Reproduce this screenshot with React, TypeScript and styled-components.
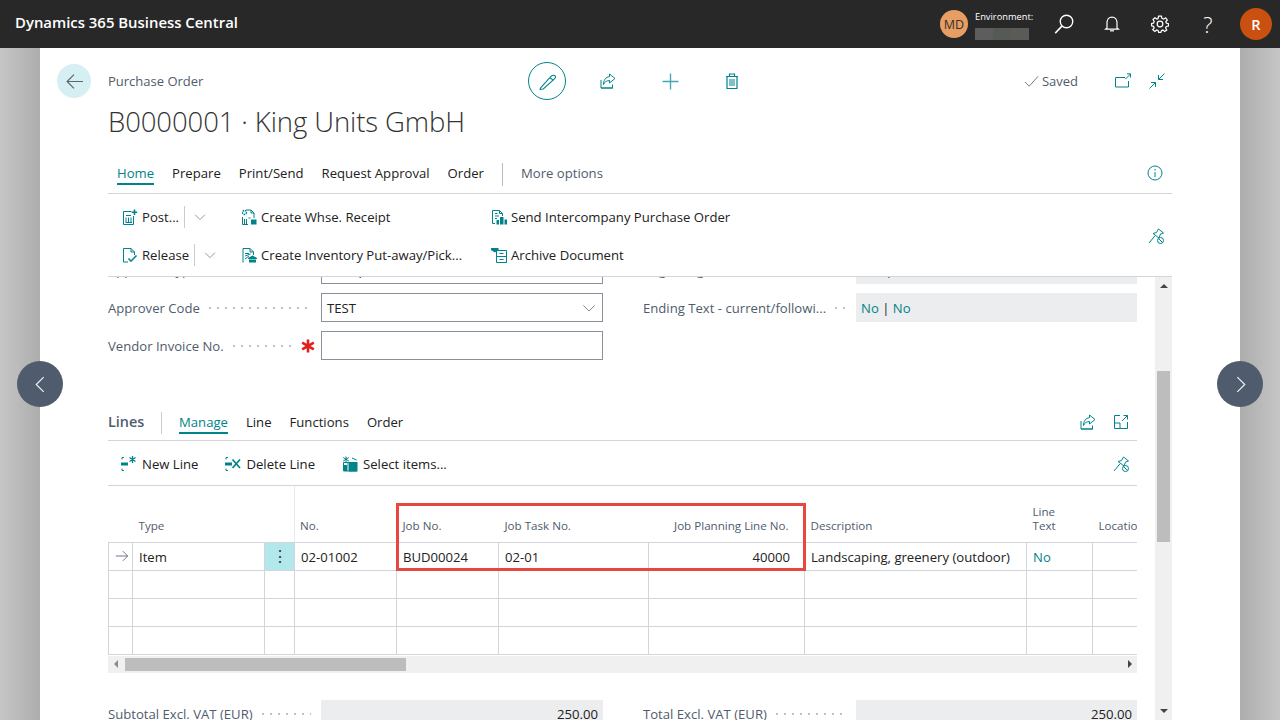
import styled, { createGlobalStyle } from 'styled-components';

const teal = '#00838a';
const label = '#505c6d';
const ink = '#212121';
const rule = '#d3d5da';
const uiFont = '"Open Sans", "Liberation Sans", sans-serif';

const Global = createGlobalStyle`
  html, body { margin: 0; padding: 0; background: #fff; }
  body { font-family: ${uiFont}; font-size: 13.13px; color: ${ink}; }
  * { box-sizing: border-box; }
`;

/* ---- icons ---- */

const Svg = styled.svg<{ $c?: string }>`
  display: block;
  flex: none;
  fill: none;
  stroke: ${(p) => p.$c ?? teal};
  stroke-width: 1;
`;

function Icon({ size = 16, c, children }: { size?: number; c?: string; children: React.ReactNode }) {
  return (
    <Svg $c={c} width={size} height={size} viewBox="0 0 16 16">
      {children}
    </Svg>
  );
}

const Solid = ({ d }: { d: string }) => <path d={d} fill={teal} stroke="none" />;

const PostIcon = () => (
  <Icon>
    <path d="M9.5 2.5H1.5V15.5H11.5V7" />
    <path d="M4 6.5H9M4 8.5V13M6.5 8.5V13M9 8.5V13M3.5 13.5H10" />
    <path d="M12.5 0.5V6M9.8 3.2H15.2" strokeWidth="1.6" />
  </Icon>
);
const ReleaseIcon = () => (
  <Icon>
    <path d="M1.5 1.5H9L12.5 5V8M9 1.5V5H12.5M1.5 1.5V15H6" />
    <path d="M6.5 11.5L9 14.2L14.5 8.5" strokeWidth="1.6" />
  </Icon>
);
const ReceiptIcon = () => (
  <Icon>
    <path d="M5 1H10L13 4V9M10 1V4H13M1.5 8V15.5H7" />
    <circle cx="3.5" cy="3.5" r="2" strokeDasharray="1.5 .7" strokeWidth="1.4" />
    <path d="M3.5 10V15M5.5 10V15M7.5 9H9.5" />
    <Solid d="M10 10.5H15.5V15.5H10Z" />
  </Icon>
);
const PickIcon = () => (
  <Icon>
    <path d="M2 15.5V1.5H9L12.5 5V8M9 1.5V5H12.5" />
    <path d="M4 6.5H8M4 9L9.5 7M4 12L8 9" />
    <Solid d="M7 11L11.5 8.5L16 11V12H7ZM8 12.5H15V15.5H8Z" />
  </Icon>
);
const IntercompanyIcon = () => (
  <Icon>
    <path d="M1.5 14.5V1.5H8.5L11.5 4.5V7M8.5 1.5V4.5H11.5M1.5 14.5H4" />
    <path d="M4 4.5H6.5M4 7H8M4 9.5H6" />
    <Solid d="M5.5 11H8V15.5H5.5ZM9 8H12.5V15.5H9ZM13.5 10.5H16V15.5H13.5Z" />
  </Icon>
);
const ArchiveIcon = () => (
  <Icon>
    <path d="M5.5 3.5H15.5V15.5H5.5ZM5.5 9.5H15.5M8.5 6.5H12.5M8.5 12.5H12.5" />
    <Solid d="M0 1H7.5V3L3.8 5.5L0 3Z" />
  </Icon>
);
const NewLineIcon = () => (
  <Icon>
    <path d="M1 3.5V1.5H3M1 12.5V14.5H3" />
    <Solid d="M0 6.5H7V9.5H0Z" />
    <path d="M11.5 0V7M8.5 1.5L14.5 5.5M8.5 5.5L14.5 1.5" strokeWidth="1.3" />
  </Icon>
);
const DeleteLineIcon = () => (
  <Icon>
    <path d="M1 3.5V1.5H3M1 12.5V14.5H3" />
    <Solid d="M0 6.5H7V9.5H0Z" />
    <path d="M7.5 3.5L15 12M15 3.5L7.5 12" strokeWidth="1.7" />
  </Icon>
);
const SelectItemsIcon = () => (
  <Icon>
    <path d="M1.5 6.5H14.5V15H1.5ZM6 6.5V15" />
    <Solid d="M7 6H15.5V15.5H7ZM1.5 9H5V15H1.5Z" />
    <path d="M4 0.5V6M1.2 1.5L6.8 5M1.2 5L6.8 1.5" />
    <path d="M10 2L14.5 4" />
  </Icon>
);
const ChevronDown = ({ c = '#6d7682', size = 14 }: { c?: string; size?: number }) => (
  <Icon c={c} size={size}>
    <path d="M1.5 5L8 11.5L14.5 5" />
  </Icon>
);
const PinOff = () => (
  <Icon size={16}>
    <path d="M10.5 1L15.5 5L12.5 6L11 10L5 5.5L8.5 4.5ZM6.8 8L1 15" />
    <circle cx="12.5" cy="12.5" r="3" />
    <path d="M10.5 10.5L14.5 14.5" />
  </Icon>
);
const ShareIcon = () => (
  <Icon size={16}>
    <path d="M1 7V15H12.5V11.5M1 15H13" />
    <path d="M9.5 1L15 5.5L9.5 10V7.5C6.5 7.5 4.5 9 3.5 11.5C3.5 7.5 5.5 4 9.5 3.7Z" />
  </Icon>
);
const EditIcon = () => (
  <Icon size={17}>
    <path d="M1.5 14.5L11.5 3.5C12.5 2.5 14.5 2.5 15.5 3.5C16 4.5 15.5 5 14.5 6L4 15.5L1 16Z" transform="translate(0 -0.5)" />
    <path d="M10.5 4.5L13.5 7" />
  </Icon>
);
const PlusIcon = () => (
  <Icon size={17} c="#4aa6ab">
    <path d="M8 0.5V15.5M0.5 8H15.5" strokeWidth="1.3" />
  </Icon>
);
const TrashIcon = () => (
  <Icon size={16}>
    <path d="M3 3.5V15.5H13V3.5M2 3.5H14M5.5 3.5V1H10.5V3.5" strokeWidth="1.2" />
    <path d="M6 6V13M8 6V13M10 6V13" />
  </Icon>
);
const PopOutIcon = () => (
  <Icon size={16}>
    <path d="M10 4.5H0.5V14H13.5V8" />
    <path d="M10.5 6L15.5 1M12 0.8H15.5V4.5" />
  </Icon>
);
const CollapseIcon = () => (
  <Icon size={16}>
    <path d="M15.5 0.5L9.5 6.5M9.5 2V6.5H14" />
    <path d="M0.5 15.5L6.5 9.5M2 9.5H6.5V14" />
  </Icon>
);
const ExpandLinesIcon = () => (
  <Icon>
    <path d="M7 1.5H1.5V14.5H14.5V8M1.5 9H7V14.5M9 7L14.5 1.5M10.5 1.5H14.5V5.5" />
  </Icon>
);
const InfoIcon = () => (
  <Icon>
    <circle cx="8" cy="8" r="7" />
    <path d="M8 7V12M8 4V5.5" />
  </Icon>
);
const SearchIcon = () => (
  <Icon size={20} c="#fff">
    <circle cx="10" cy="6" r="5" strokeWidth="1.1" />
    <path d="M6.5 9.5L1 15.3" strokeWidth="1.2" />
  </Icon>
);
const BellIcon = () => (
  <Icon size={16} c="#fff">
    <path d="M3 12V6.5C3 3.5 5 1.2 8 1.2S13 3.5 13 6.5V12L14.5 13.2H1.5Z" strokeWidth="1.2" />
    <path d="M6 14.8H10" strokeWidth="1.2" />
  </Icon>
);
const GearIcon = () => (
  <Icon size={18} c="#fff">
    <circle cx="8" cy="8" r="2.5" strokeWidth="1.1" />
    <path
      d="M6.7 1H9.3L9.7 3L11.3 3.7L13 2.5L14.5 4.4L13.2 6L13.6 7.2L15.5 7.8V9.8L13.6 10.2L13 11.5L14 13.3L12.2 14.7L10.6 13.4L9.3 13.9L8.8 15.5H6.8L6.3 13.8L5 13.3L3.4 14.6L1.6 13L2.8 11.4L2.2 10.1L0.5 9.6V7.6L2.3 7.1L2.8 5.8L1.8 4L3.5 2.5L5.2 3.6L6.3 3.1Z"
      strokeWidth="1.1"
    />
  </Icon>
);
const CheckIcon = () => (
  <Icon size={15} c="#6a7480">
    <path d="M1 8.5L5.5 13L15 2.5" />
  </Icon>
);
const ArrowLeft = () => (
  <Icon size={17} c="#5b6672">
    <path d="M16 8H1M7.5 1.5L1 8L7.5 14.5" strokeWidth="1.1" />
  </Icon>
);
const ArrowRight = () => (
  <Icon size={14} c="#5b6672">
    <path d="M1 8H14.5M9 2.5L14.5 8L9 13.5" />
  </Icon>
);
const NavChevron = ({ dir }: { dir: 'left' | 'right' }) => (
  <Icon size={17} c="#f2f3f5">
    <path d={dir === 'left' ? 'M11 1L4 8L11 15' : 'M5 1L12 8L5 15'} strokeWidth="1.1" />
  </Icon>
);

/* ---- data ---- */

const barRows = [
  { Ico: PostIcon, text: 'Post...', split: true },
  { Ico: ReceiptIcon, text: 'Create Whse. Receipt' },
  { Ico: IntercompanyIcon, text: 'Send Intercompany Purchase Order' },
  { Ico: ReleaseIcon, text: 'Release', split: true },
  { Ico: PickIcon, text: 'Create Inventory Put-away/Pick...' },
  { Ico: ArchiveIcon, text: 'Archive Document' },
];

const lineActions = [
  { Ico: NewLineIcon, text: 'New Line' },
  { Ico: DeleteLineIcon, text: 'Delete Line' },
  { Ico: SelectItemsIcon, text: 'Select items...' },
];

const columns = [24, 132, 30, 102, 102, 150, 156, 222, 66, 100];

export default function App() {
  return (
    <Page>
      <Global />
      <TopBar>
        <Brand>Dynamics 365 Business Central</Brand>
        <TopRight>
          <Initials>MD</Initials>
          <Env>
            <EnvLabel>Environment:</EnvLabel>
            <EnvMask />
          </Env>
          <TopIcon><SearchIcon /></TopIcon>
          <TopIcon><BellIcon /></TopIcon>
          <TopIcon><GearIcon /></TopIcon>
          <TopIcon><Question>?</Question></TopIcon>
          <UserBadge>R</UserBadge>
        </TopRight>
      </TopBar>

      <Stage>
        <Side $flip={false} />
        <Sheet>
          <HeaderRow>
            <BackButton><ArrowLeft /></BackButton>
            <Crumb>Purchase Order</Crumb>
            <EditButton><EditIcon /></EditButton>
            <HeaderIcons>
              <IconSlot><ShareIcon /></IconSlot>
              <IconSlot><PlusIcon /></IconSlot>
              <IconSlot><TrashIcon /></IconSlot>
            </HeaderIcons>
            <Saved><CheckIcon />Saved</Saved>
            <WindowIcons>
              <IconSlot><PopOutIcon /></IconSlot>
              <IconSlot><CollapseIcon /></IconSlot>
            </WindowIcons>
          </HeaderRow>
          <Title>B0000001 · King Units GmbH</Title>

          <Tabs>
            <Tab $active>Home</Tab>
            <Tab>Prepare</Tab>
            <Tab>Print/Send</Tab>
            <Tab>Request Approval</Tab>
            <Tab>Order</Tab>
            <TabDivider />
            <Tab $muted>More options</Tab>
            <TabEnd><InfoIcon /></TabEnd>
          </Tabs>

          <ActionBar>
            <ActionGrid>
              {barRows.map(({ Ico, text, split }) => (
                <Action key={text}>
                  <Ico />
                  <span>{text}</span>
                  {split && (
                    <>
                      <SplitRule />
                      <ChevronDown size={12} />
                    </>
                  )}
                </Action>
              ))}
            </ActionGrid>
            <PinSlot><PinOff /></PinSlot>
          </ActionBar>

          <Body>
            <Content>
              <FormGrid>
                <Field>
                  <FieldLabel>Approver Type<Dots /></FieldLabel>
                  <Input>Salesperson/Purchaser</Input>
                </Field>
                <Field>
                  <FieldLabel>Beginning Text<Dots /></FieldLabel>
                  <ReadOnly>Yes | No</ReadOnly>
                </Field>
                <Field>
                  <FieldLabel>Approver Code<Dots /></FieldLabel>
                  <Input>
                    TEST
                    <ChevronDown />
                  </Input>
                </Field>
                <Field>
                  <FieldLabel>Ending Text - current/followi...<Dots /></FieldLabel>
                  <ReadOnly><LinkText>No</LinkText>&nbsp;|&nbsp;<LinkText>No</LinkText></ReadOnly>
                </Field>
                <Field>
                  <FieldLabel>
                    Vendor Invoice No.<Dots />
                    <Required viewBox="0 0 14 14" width="14" height="14">
                      <path d="M7 0.5V13.5M1.2 3.6L12.8 10.4M1.2 10.4L12.8 3.6" />
                    </Required>
                  </FieldLabel>
                  <Input />
                </Field>
              </FormGrid>

              <LinesHeader>
                <LinesTitle>Lines</LinesTitle>
                <LinesRule />
                <Tab $active>Manage</Tab>
                <Tab>Line</Tab>
                <Tab>Functions</Tab>
                <Tab>Order</Tab>
                <LinesIcons>
                  <IconSlot><ShareIcon /></IconSlot>
                  <IconSlot><ExpandLinesIcon /></IconSlot>
                </LinesIcons>
              </LinesHeader>

              <LinesBar>
                {lineActions.map(({ Ico, text }) => (
                  <LineAction key={text}>
                    <Ico />
                    {text}
                  </LineAction>
                ))}
                <LinesPin><PinOff /></LinesPin>
              </LinesBar>

              <TableWrap>
                <Grid>
                  <colgroup>
                    {columns.map((w, i) => (
                      <col key={i} width={w} />
                    ))}
                  </colgroup>
                  <thead>
                    <tr>
                      <Th />
                      <Th>Type</Th>
                      <Th />
                      <Th $sep>No.</Th>
                      <Th>Job No.</Th>
                      <Th>Job Task No.</Th>
                      <Th $right>Job Planning Line No.</Th>
                      <Th>Description</Th>
                      <Th>Line<br />Text</Th>
                      <Th>Location</Th>
                    </tr>
                  </thead>
                  <tbody>
                    <tr>
                      <Td $center><ArrowRight /></Td>
                      <Td>Item</Td>
                      <MenuCell>⋮</MenuCell>
                      <Td>02-01002</Td>
                      <Td>BUD00024</Td>
                      <Td>02-01</Td>
                      <Td $right>40000</Td>
                      <Td>Landscaping, greenery (outdoor)</Td>
                      <Td><LinkText>No</LinkText></Td>
                      <Td />
                    </tr>
                    {[0, 1, 2].map((r) => (
                      <tr key={r}>
                        {columns.map((_, i) => (
                          <Td key={i} />
                        ))}
                      </tr>
                    ))}
                  </tbody>
                </Grid>
                <Highlight />
              </TableWrap>

              <HScroll>
                <ArrowLeftTri />
                <HThumb />
                <ArrowRightTri />
              </HScroll>

              <Totals>
                <Field>
                  <FieldLabel>Subtotal Excl. VAT (EUR)<Dots /></FieldLabel>
                  <ReadOnly $right>250.00</ReadOnly>
                </Field>
                <Field>
                  <FieldLabel>Total Excl. VAT (EUR)<Dots /></FieldLabel>
                  <ReadOnly $right>250.00</ReadOnly>
                </Field>
              </Totals>
            </Content>

            <VScroll>
              <ArrowUpTri />
              <VThumb />
              <ArrowDownTri />
            </VScroll>
          </Body>
        </Sheet>
        <Side $flip />
        <NavButton $side="left"><NavChevron dir="left" /></NavButton>
        <NavButton $side="right"><NavChevron dir="right" /></NavButton>
      </Stage>
    </Page>
  );
}

/* ---- styled ---- */

const Page = styled.div`
  width: 1280px;
  height: 720px;
  display: flex;
  flex-direction: column;
  overflow: hidden;
`;

const TopBar = styled.header`
  flex: none;
  height: 48px;
  display: flex;
  align-items: center;
  justify-content: space-between;
  padding: 0 8px 0 15px;
  background: #282828;
`;

const Brand = styled.div`
  color: #fff;
  font-size: 14.9px;
  font-weight: 600;
  position: relative;
  top: -2px;
`;

const TopRight = styled.div`
  display: flex;
  align-items: center;
`;

const Initials = styled.div`
  width: 28px;
  height: 28px;
  border-radius: 50%;
  background: #e89d63;
  color: #33302c;
  font-size: 12.5px;
  display: flex;
  align-items: center;
  justify-content: center;
`;

const Env = styled.div`
  width: 83px;
  margin-left: 7px;
  padding-top: 3px;
  display: flex;
  flex-direction: column;
  gap: 5px;
`;

const EnvLabel = styled.div`
  color: #fff;
  font-size: 9.3px;
  line-height: 12px;
`;

const EnvMask = styled.div`
  width: 54px;
  height: 12px;
  background: linear-gradient(90deg, #5d5d5d 0 33%, #565a57 33% 66%, #5a5b57 66%);
`;

const TopIcon = styled.div`
  width: 48px;
  height: 48px;
  display: flex;
  align-items: center;
  justify-content: center;
  &:nth-of-type(3) { margin-left: -18px; }
`;

const Question = styled.span`
  color: #fff;
  font-size: 22px;
  font-weight: 300;
`;

const UserBadge = styled.div`
  width: 32px;
  height: 32px;
  margin-left: 8px;
  border-radius: 50%;
  background: #c9500e;
  color: #fff;
  font-size: 14.5px;
  font-weight: 600;
  display: flex;
  align-items: center;
  justify-content: center;
`;

const Stage = styled.div`
  flex: 1;
  min-height: 0;
  display: flex;
  position: relative;
`;

const Side = styled.div<{ $flip: boolean }>`
  width: 40px;
  flex: none;
  background: linear-gradient(${(p) => (p.$flip ? '90deg' : '270deg')}, #adadad, #c6c6c6);
`;

const Sheet = styled.main`
  width: 1200px;
  flex: none;
  display: flex;
  flex-direction: column;
  background: #fff;
  min-height: 0;
`;

const NavButton = styled.div<{ $side: 'left' | 'right' }>`
  position: absolute;
  top: 313px;
  ${(p) => p.$side}: 17px;
  width: 46px;
  height: 46px;
  border-radius: 50%;
  background: #505c6d;
  display: flex;
  align-items: center;
  justify-content: center;
`;

const HeaderRow = styled.div`
  flex: none;
  height: 38px;
  margin-top: 14px;
  padding-left: 17px;
  display: flex;
  align-items: center;
`;

const BackButton = styled.div`
  width: 34px;
  height: 34px;
  border-radius: 50%;
  background: #d6eff2;
  display: flex;
  align-items: center;
  justify-content: center;
  flex: none;
`;

const Crumb = styled.div`
  width: 420px;
  margin-left: 17px;
  flex: none;
  color: ${label};
  font-size: 13px;
`;

const EditButton = styled.div`
  width: 38px;
  height: 38px;
  flex: none;
  border-radius: 50%;
  border: 1px solid ${teal};
  display: flex;
  align-items: center;
  justify-content: center;
`;

const HeaderIcons = styled.div`
  display: flex;
  gap: 30px;
  margin-left: 26px;
`;

const IconSlot = styled.div`
  width: 32px;
  height: 32px;
  display: flex;
  align-items: center;
  justify-content: center;
`;

const Saved = styled.div`
  margin-left: auto;
  display: flex;
  align-items: center;
  gap: 3px;
  color: ${label};
  font-size: 13px;
`;

const WindowIcons = styled.div`
  display: flex;
  gap: 2px;
  margin-left: 29px;
  margin-right: 67px;
`;

const Title = styled.h1`
  flex: none;
  margin: 4px 0 0 68px;
  font-size: 27.5px;
  line-height: 36px;
  font-weight: 300;
  color: #333;
  letter-spacing: -0.1px;
`;

const Tabs = styled.nav`
  flex: none;
  height: 34px;
  margin: 20px 68px 0;
  padding-left: 9px;
  display: flex;
  align-items: flex-start;
  gap: 18px;
  border-bottom: 1px solid ${rule};
`;

const Tab = styled.div<{ $active?: boolean; $muted?: boolean }>`
  margin-top: 4px;
  height: 21px;
  line-height: 19px;
  color: ${(p) => (p.$active ? teal : p.$muted ? label : ink)};
  border-bottom: 2px solid ${(p) => (p.$active ? teal : 'transparent')};
`;

const TabDivider = styled.div`
  width: 1px;
  height: 23px;
  margin-top: 3px;
  background: #b5b9c0;
`;

const TabEnd = styled.div`
  margin-left: auto;
  margin-right: 9px;
  margin-top: 5px;
`;

const ActionBar = styled.div`
  flex: none;
  height: 83px;
  margin: 0 68px;
  padding: 4px 8px 0 14px;
  display: flex;
  justify-content: space-between;
  border-bottom: 1px solid ${rule};
`;

const ActionGrid = styled.div`
  display: grid;
  grid-template-columns: 119px 250px auto;
  grid-auto-rows: 38px;
`;

const Action = styled.div`
  display: flex;
  align-items: center;
  gap: 4px;
`;

const SplitRule = styled.div`
  width: 1px;
  height: 22px;
  margin: 0 5px 0 1px;
  background: #c8cbd0;
`;

const PinSlot = styled.div`
  align-self: center;
  margin-top: -2px;
`;

const Body = styled.div`
  flex: 1;
  min-height: 0;
  margin-left: 68px;
  margin-right: 68px;
  display: flex;
  gap: 18px;
  overflow: hidden;
`;

const Content = styled.div`
  width: 1029px;
  flex: none;
  margin-top: -22px;
`;

const FormGrid = styled.div`
  display: grid;
  grid-template-columns: 495px 494px;
  column-gap: 40px;
  row-gap: 9px;
`;

const Field = styled.div`
  display: flex;
  align-items: center;
  height: 29px;
`;

const FieldLabel = styled.div`
  width: 213px;
  flex: none;
  padding-right: 10px;
  display: flex;
  align-items: center;
  color: ${label};
  white-space: nowrap;
`;

const Dots = styled.span`
  flex: 1;
  min-width: 0;
  height: 2px;
  margin-left: 9px;
  background: radial-gradient(circle at 1px 1px, #bfc3c9 1px, transparent 1px) 0 0 / 8px 2px repeat-x;
`;

const Required = styled.svg`
  flex: none;
  margin-left: 6px;
  margin-right: -4px;
  stroke: #e0201c;
  stroke-width: 2.6;
  fill: none;
`;

const Input = styled.div`
  flex: 1;
  height: 29px;
  padding: 0 6px 0 5px;
  border: 1px solid #8a9099;
  display: flex;
  align-items: center;
  justify-content: space-between;
  color: ${ink};
`;

const ReadOnly = styled.div<{ $right?: boolean }>`
  flex: 1;
  height: 29px;
  padding: 0 5px;
  background: #ecedee;
  display: flex;
  align-items: center;
  justify-content: ${(p) => (p.$right ? 'flex-end' : 'flex-start')};
  color: ${ink};
`;

const LinkText = styled.span`
  color: ${teal};
`;

const LinesHeader = styled.div`
  height: 33px;
  margin-top: 48px;
  padding-top: 1px;
  display: flex;
  align-items: flex-start;
  gap: 18px;
  border-bottom: 1px solid ${rule};
`;

const LinesTitle = styled.div`
  width: 35px;
  margin-top: 3px;
  line-height: 20px;
  font-size: 14.4px;
  font-weight: 600;
  color: ${label};
`;

const LinesRule = styled.div`
  width: 1px;
  height: 22px;
  margin: 3px -1px 0 0;
  background: #c8cbd0;
`;

const LinesIcons = styled.div`
  margin-left: auto;
  margin-top: -3px;
  display: flex;
  gap: 1px;
`;

const LinesBar = styled.div`
  height: 45px;
  padding: 2px 8px 0 13px;
  display: flex;
  align-items: center;
  gap: 27px;
  border-bottom: 1px solid ${rule};
`;

const LineAction = styled.div`
  display: flex;
  align-items: center;
  gap: 5px;
`;

const LinesPin = styled.div`
  margin-left: auto;
`;

const TableWrap = styled.div`
  position: relative;
  overflow: hidden;
`;

const Grid = styled.table`
  width: 1084px;
  table-layout: fixed;
  border-collapse: collapse;
`;

const Th = styled.th<{ $right?: boolean; $sep?: boolean }>`
  height: 56px;
  padding: 0 16px 9px ${(p) => (p.$sep ? '5px' : '6px')};
  vertical-align: bottom;
  text-align: ${(p) => (p.$right ? 'right' : 'left')};
  font-size: 11.6px;
  line-height: 14px;
  font-weight: 400;
  color: ${label};
  white-space: nowrap;
  border-bottom: 1px solid ${rule};
  border-left: ${(p) => (p.$sep ? '1px solid #e9eaec' : 'none')};
`;

const Td = styled.td<{ $right?: boolean; $center?: boolean }>`
  height: 28px;
  padding: ${(p) => (p.$center ? '0 0 0 6px' : '1px 14px 0 6px')};
  text-align: ${(p) => (p.$right ? 'right' : 'left')};
  white-space: nowrap;
  overflow: hidden;
  border: 1px solid ${rule};
  border-top: none;
`;

const MenuCell = styled.td`
  height: 28px;
  padding: 0;
  text-align: center;
  font-size: 16px;
  color: #333;
  background: #b2e8ec;
  border: 1px solid ${rule};
  border-top: none;
`;

const Highlight = styled.div`
  position: absolute;
  left: 288px;
  top: 17px;
  width: 410px;
  height: 68px;
  border: 3px solid #e8473f;
  pointer-events: none;
`;

const HScroll = styled.div`
  height: 17px;
  margin-top: 1px;
  padding: 2px 5px 2px 6px;
  background: #f0f0f0;
  display: flex;
  align-items: center;
`;

const HThumb = styled.div`
  width: 281px;
  height: 13px;
  margin-left: 7px;
  background: #bdbdbd;
`;

const Tri = styled.span`
  width: 0;
  height: 0;
  flex: none;
  border-style: solid;
`;

const ArrowLeftTri = styled(Tri)`
  border-width: 4px 4px 4px 0;
  border-color: transparent #8b8b8b transparent transparent;
`;

const ArrowRightTri = styled(Tri)`
  margin-left: auto;
  border-width: 4px 0 4px 4px;
  border-color: transparent transparent transparent #444;
`;

const ArrowUpTri = styled(Tri)`
  margin-top: 7px;
  border-width: 0 4px 4px 4px;
  border-color: transparent transparent #444 transparent;
`;

const ArrowDownTri = styled(Tri)`
  margin-top: auto;
  margin-bottom: 7px;
  border-width: 4px 4px 0 4px;
  border-color: #444 transparent transparent transparent;
`;

const Totals = styled.div`
  margin-top: 27px;
  display: grid;
  grid-template-columns: 495px 494px;
  column-gap: 40px;
`;

const VScroll = styled.div`
  width: 17px;
  flex: none;
  background: #f0f0f0;
  display: flex;
  flex-direction: column;
  align-items: center;
`;

const VThumb = styled.div`
  width: 13px;
  height: 171px;
  margin-top: 83px;
  background: #bdbdbd;
`;
